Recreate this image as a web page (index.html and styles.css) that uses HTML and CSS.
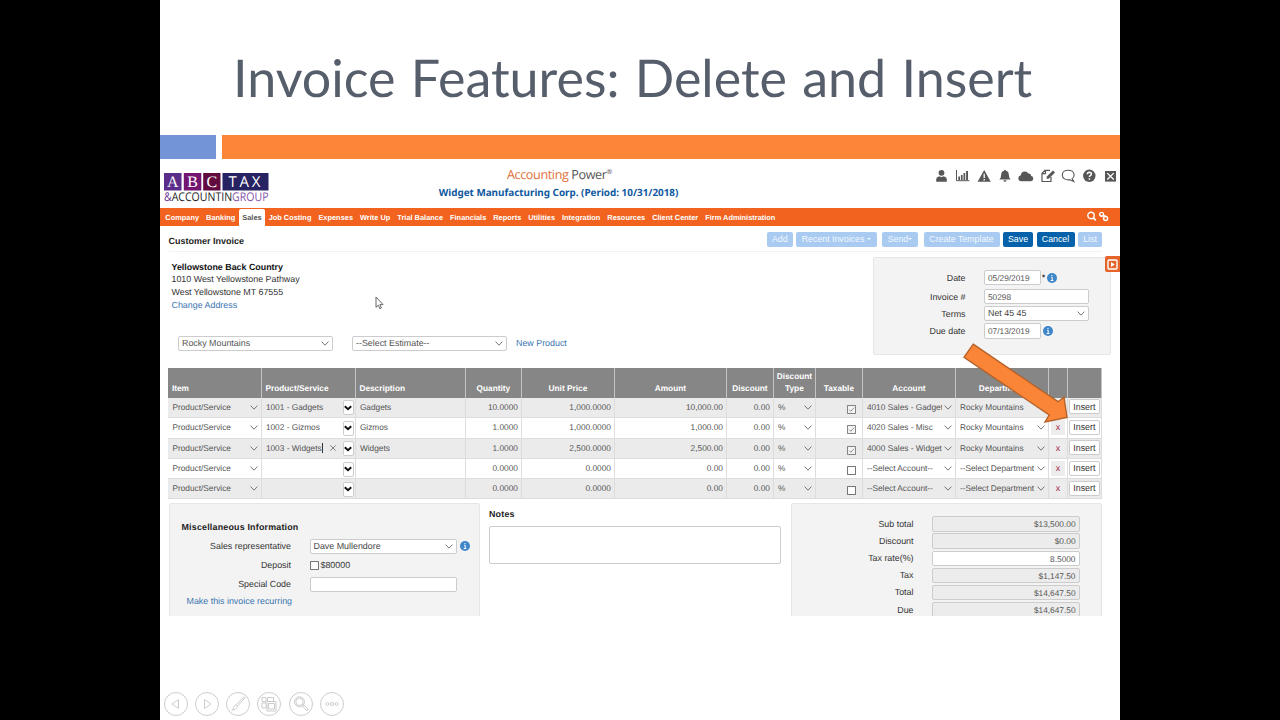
FILE: index.html
```html
<!DOCTYPE html>
<html lang="en">
<head>
    <meta charset="UTF-8">
    <meta name="viewport" content="width=device-width, initial-scale=1.0">
    <title>Invoice Features: Delete and Insert</title>
    <link rel="stylesheet" href="styles.css">
</head>
<body>
    <!-- Shared icons -->
    <svg class="sprite" width="0" height="0">
        <symbol id="chevron" viewBox="0 0 8 5"><path d="M.6.6 4 4.2 7.4.6" fill="none" stroke="#666" stroke-width=".9"/></symbol>
        <symbol id="drop" viewBox="0 0 8 6"><path d="M.8 1.2 4 4.3 7.2 1.2" fill="none" stroke="#111" stroke-width="1.9"/></symbol>
        <symbol id="info" viewBox="0 0 10 10"><circle cx="5" cy="5" r="5" fill="#3f87c9"/><path d="M5 2v1.2M4.2 4.3h1v3M3.7 7.5h2.7" fill="none" stroke="#fff" stroke-width="1"/></symbol>
        <symbol id="checked" viewBox="0 0 8 8"><rect x=".5" y=".5" width="7" height="7" fill="#f4f4f4" stroke="#777" stroke-width=".8"/><path d="M2 4.1 3.4 5.6 6.2 2.4" fill="none" stroke="#888" stroke-width=".8"/></symbol>
        <symbol id="unchecked" viewBox="0 0 8 8"><rect x=".5" y=".5" width="7" height="7" fill="#fff" stroke="#666" stroke-width=".8"/></symbol>
    </svg>

    <div class="slide">
        <h1 class="slide-title">Invoice Features: Delete and Insert</h1>
        <div class="slide-rule">
            <span class="rule-blue"></span>
            <span class="rule-orange"></span>
        </div>

        <div class="app">
            <header class="app-header">
                <svg class="logo" width="106" height="34" viewBox="0 0 106 34">
                    <rect x="0" y="0" width="17.5" height="17.5" fill="#5b2d8a"/>
                    <rect x="19.8" y="0" width="17.5" height="17.5" fill="#74156f"/>
                    <rect x="39.2" y="0" width="17.3" height="17.5" fill="#620b3e"/>
                    <rect x="58.5" y="0" width="46" height="17.5" fill="#272262"/>
                    <g fill="#fff" font-family="Liberation Serif, serif" font-size="16" text-anchor="middle">
                        <text x="8.8" y="14.4">A</text>
                        <text x="28.5" y="14.4">B</text>
                        <text x="47.8" y="14.4">C</text>
                    </g>
                    <text x="64.5" y="14.2" textLength="32" fill="#fff" font-family="Open Sans, sans-serif" font-size="15">TAX</text>
                    <text class="logo-line" x="0" y="27.6" textLength="104.5" lengthAdjust="spacingAndGlyphs"><tspan fill="#6b3596">&amp;</tspan><tspan fill="#222">ACCOUNTIN</tspan><tspan fill="#8455a8">GROUP</tspan></text>
                </svg>
                <div class="brand">
                    <div class="brand-name"><span>Accounting</span> Power<sup>®</sup></div>
                    <div class="company">Widget Manufacturing Corp. (Period: 10/31/2018)</div>
                </div>
                <svg class="header-icons" width="180" height="14" viewBox="0 0 180 14" fill="#575757">
                    <circle cx="5.500" cy="3.800" r="2.900"/>
                    <path d="M.2 12.700V10q.2-2.300 3.200-2.800 2.100 1.400 4.200 0 3 .5 3.200 2.800v2.700z"/>
                    <path d="M20.500 1v10.700h12.800" fill="none" stroke="#575757"/>
                    <path d="M22.300 7.500H24V11h-1.700zM24.900 6h1.700v5h-1.700zM27.500 4h1.700v7h-1.700zM30.100 2h1.900v9h-1.900z"/>
                    <path d="M48.200 1 54.800 12.800H41.600z"/>
                    <path d="M48.200 4.800v4.100M48.200 10v1.400" stroke="#fff" stroke-width="1.300"/>
                    <path d="M69 .7q.9 0 .9 1.100 2.900.7 2.900 4 .1 3.300 1.900 4.700H63.300Q65.100 9.100 65.200 5.800q0-3.300 2.900-4 0-1.100.9-1.100zM67.400 11.300h3.200q-.3 1.500-1.600 1.500t-1.600-1.500z"/>
                    <path d="M85.200 12.300q-2.900-.4-2.900-3.100 0-2.500 2.500-3 .4-3.700 4-3.800 2.600 0 3.600 2.100 2.500-.3 2.700 2.200 2.200.6 2.200 2.800 0 2.500-2.500 2.800z"/>
                    <path d="M115 8v4.500h-9V4.200l3-2.800h5M106 4.700h3.500V1.400" fill="none" stroke="#575757" stroke-width="1.200"/>
                    <path d="m110.500 10 .6-2.700 5.900-5.700 2 1.900-6 5.900z"/>
                    <path d="M132.200 1.200c3.400 0 5.900 2 5.900 4.700 0 1.700-.7 2.900-2 3.700l1.700 3-3.900-1.800c-4.200.6-7.600-1.400-7.600-4.900 0-2.700 2.500-4.700 5.900-4.700z" fill="none" stroke="#575757" stroke-width="1.100"/>
                    <circle cx="153.300" cy="6.800" r="6.200"/>
                    <path d="M151.300 5.300q.2-2 2.100-2 2 .1 2 1.800 0 1-1.100 1.600-.9.500-.9 1.400M153.400 9.300v1.500" fill="none" stroke="#fff" stroke-width="1.500"/>
                    <path d="M169 2h11v10.600h-11z"/>
                    <path d="m171.300 4.100 6.400 6.400M177.700 4.100l-6.400 6.400" stroke="#fff" stroke-width="1.300"/>
                </svg>
            </header>

            <nav class="nav">
                <a class="nav-item">Company</a>
                <a class="nav-item">Banking</a>
                <a class="nav-item active">Sales</a>
                <a class="nav-item">Job Costing</a>
                <a class="nav-item">Expenses</a>
                <a class="nav-item">Write Up</a>
                <a class="nav-item">Trial Balance</a>
                <a class="nav-item">Financials</a>
                <a class="nav-item">Reports</a>
                <a class="nav-item">Utilities</a>
                <a class="nav-item">Integration</a>
                <a class="nav-item">Resources</a>
                <a class="nav-item">Client Center</a>
                <a class="nav-item">Firm Administration</a>
                <svg class="nav-icons" width="22" height="11" viewBox="0 0 22 11" fill="none" stroke="#fff" stroke-width="1.400">
                    <circle cx="4" cy="4.500" r="3.200"/>
                    <path d="m6.300 6.900 2.500 2.500" stroke-width="1.800"/>
                    <circle cx="14.600" cy="3.300" r="1.900"/>
                    <circle cx="18.600" cy="7.500" r="2"/>
                    <path d="m14.600 5 4-.2"/>
                </svg>
            </nav>

            <div class="toolbar">
                <h2 class="page-title">Customer Invoice</h2>
                <div class="actions">
                    <button class="btn btn-add">Add</button>
                    <button class="btn btn-recent">Recent Invoices <i class="caret"></i></button>
                    <button class="btn btn-send">Send<i class="caret"></i></button>
                    <button class="btn btn-template">Create Template</button>
                    <button class="btn btn-save solid">Save</button>
                    <button class="btn btn-cancel solid">Cancel</button>
                    <button class="btn btn-list">List</button>
                </div>
            </div>

            <section class="invoice-top">
                <div class="customer">
                    <div class="address">
                        <strong>Yellowstone Back Country</strong>
                        <span>1010 West Yellowstone Pathway</span>
                        <span>West Yellowstone MT 67555</span>
                        <a class="link">Change Address</a>
                    </div>
                    <div class="customer-selects">
                        <div class="field select">Rocky Mountains<svg class="chev"><use href="#chevron"/></svg></div>
                        <div class="field select">--Select Estimate--<svg class="chev"><use href="#chevron"/></svg></div>
                        <a class="link">New Product</a>
                    </div>
                </div>
                <div class="panel invoice-meta">
                    <div class="meta-row"><label>Date</label><div class="field short">05/29/2019</div><b class="req">*</b><svg class="info"><use href="#info"/></svg></div>
                    <div class="meta-row wide-gap"><label>Invoice #</label><div class="field long">50298</div></div>
                    <div class="meta-row"><label>Terms</label><div class="field long select dark">Net 45 45<svg class="chev"><use href="#chevron"/></svg></div></div>
                    <div class="meta-row"><label>Due date</label><div class="field short">07/13/2019</div><svg class="info after"><use href="#info"/></svg></div>
                </div>
            </section>

            <!-- Line items -->
            <table class="items">
                <colgroup>
                    <col class="c-item"><col class="c-product"><col class="c-desc"><col class="c-qty"><col class="c-price"><col class="c-amount"><col class="c-disc"><col class="c-type"><col class="c-tax"><col class="c-account"><col class="c-dept"><col class="c-del"><col class="c-insert">
                </colgroup>
                <thead>
                    <tr><th class="left">Item</th><th class="left">Product/Service</th><th class="left">Description</th><th>Quantity</th><th>Unit Price</th><th>Amount</th><th>Discount</th><th>Discount Type</th><th>Taxable</th><th>Account</th><th>Department</th><th></th><th></th></tr>
                </thead>
                <tbody>
                    <tr>
                        <td><div class="cell">Product/Service<svg class="chev"><use href="#chevron"/></svg></div></td>
                        <td><div class="cell">1001 - Gadgets<span class="drop"><svg><use href="#drop"/></svg></span></div></td>
                        <td>Gadgets</td><td class="num">10.0000</td><td class="num">1,000.0000</td><td class="num">10,000.00</td><td class="num">0.00</td>
                        <td><div class="cell">%<svg class="chev"><use href="#chevron"/></svg></div></td>
                        <td class="tick"><svg><use href="#checked"/></svg></td>
                        <td><div class="cell"><span class="clip">4010 Sales - Gadgets</span><svg class="chev"><use href="#chevron"/></svg></div></td>
                        <td><div class="cell">Rocky Mountains</div></td>
                        <td class="del"></td><td class="ins"><button class="insert">Insert</button></td>
                    </tr>
                    <tr>
                        <td><div class="cell">Product/Service<svg class="chev"><use href="#chevron"/></svg></div></td>
                        <td><div class="cell">1002 - Gizmos<span class="drop"><svg><use href="#drop"/></svg></span></div></td>
                        <td>Gizmos</td><td class="num">1.0000</td><td class="num">1,000.0000</td><td class="num">1,000.00</td><td class="num">0.00</td>
                        <td><div class="cell">%<svg class="chev"><use href="#chevron"/></svg></div></td>
                        <td class="tick"><svg><use href="#checked"/></svg></td>
                        <td><div class="cell"><span class="clip">4020 Sales - Misc</span><svg class="chev"><use href="#chevron"/></svg></div></td>
                        <td><div class="cell">Rocky Mountains<svg class="chev"><use href="#chevron"/></svg></div></td>
                        <td class="del"><span>x</span></td><td class="ins"><button class="insert">Insert</button></td>
                    </tr>
                    <tr>
                        <td><div class="cell">Product/Service<svg class="chev"><use href="#chevron"/></svg></div></td>
                        <td><div class="cell"><span class="typing">1003 - Widgets</span><svg class="clear" viewBox="0 0 6 6"><path d="m.3.3 5.400 5.400M5.700.3.3 5.700" stroke="#666" stroke-width=".8"/></svg><span class="drop"><svg><use href="#drop"/></svg></span></div></td>
                        <td>Widgets</td><td class="num">1.0000</td><td class="num">2,500.0000</td><td class="num">2,500.00</td><td class="num">0.00</td>
                        <td><div class="cell">%<svg class="chev"><use href="#chevron"/></svg></div></td>
                        <td class="tick"><svg><use href="#checked"/></svg></td>
                        <td><div class="cell"><span class="clip">4000 Sales - Widgets</span><svg class="chev"><use href="#chevron"/></svg></div></td>
                        <td><div class="cell">Rocky Mountains<svg class="chev"><use href="#chevron"/></svg></div></td>
                        <td class="del"><span>x</span></td><td class="ins"><button class="insert">Insert</button></td>
                    </tr>
                    <tr>
                        <td><div class="cell">Product/Service<svg class="chev"><use href="#chevron"/></svg></div></td>
                        <td><div class="cell"><span class="drop"><svg><use href="#drop"/></svg></span></div></td>
                        <td></td><td class="num">0.0000</td><td class="num">0.0000</td><td class="num">0.00</td><td class="num">0.00</td>
                        <td><div class="cell">%<svg class="chev"><use href="#chevron"/></svg></div></td>
                        <td class="tick"><svg><use href="#unchecked"/></svg></td>
                        <td><div class="cell"><span class="clip">--Select Account--</span><svg class="chev"><use href="#chevron"/></svg></div></td>
                        <td><div class="cell"><span class="clip">--Select Department</span><svg class="chev"><use href="#chevron"/></svg></div></td>
                        <td class="del"><span>x</span></td><td class="ins"><button class="insert">Insert</button></td>
                    </tr>
                    <tr>
                        <td><div class="cell">Product/Service<svg class="chev"><use href="#chevron"/></svg></div></td>
                        <td><div class="cell"><span class="drop"><svg><use href="#drop"/></svg></span></div></td>
                        <td></td><td class="num">0.0000</td><td class="num">0.0000</td><td class="num">0.00</td><td class="num">0.00</td>
                        <td><div class="cell">%<svg class="chev"><use href="#chevron"/></svg></div></td>
                        <td class="tick"><svg><use href="#unchecked"/></svg></td>
                        <td><div class="cell"><span class="clip">--Select Account--</span><svg class="chev"><use href="#chevron"/></svg></div></td>
                        <td><div class="cell"><span class="clip">--Select Department</span><svg class="chev"><use href="#chevron"/></svg></div></td>
                        <td class="del"><span>x</span></td><td class="ins"><button class="insert">Insert</button></td>
                    </tr>
                </tbody>
            </table>

            <section class="invoice-bottom">
                <div class="panel misc">
                    <h3>Miscellaneous Information</h3>
                    <div class="misc-row"><label>Sales representative</label><div class="field long select dark">Dave Mullendore<svg class="chev"><use href="#chevron"/></svg></div><svg class="info"><use href="#info"/></svg></div>
                    <div class="misc-row"><label>Deposit</label><svg class="box"><use href="#unchecked"/></svg><span class="deposit">$80000</span></div>
                    <div class="misc-row"><label>Special Code</label><div class="field long"></div></div>
                    <a class="link">Make this invoice recurring</a>
                </div>
                <div class="notes">
                    <h3>Notes</h3>
                    <div class="notes-box"></div>
                </div>
                <div class="panel totals">
                    <div class="total-row"><label>Sub total</label><div class="field off">$13,500.00</div></div>
                    <div class="total-row"><label>Discount</label><div class="field off">$0.00</div></div>
                    <div class="total-row"><label>Tax rate(%)</label><div class="field">8.5000</div></div>
                    <div class="total-row"><label>Tax</label><div class="field off">$1,147.50</div></div>
                    <div class="total-row"><label>Total</label><div class="field off">$14,647.50</div></div>
                    <div class="total-row"><label>Due</label><div class="field off">$14,647.50</div></div>
                </div>
            </section>

            <div class="side-tab">
                <svg width="11" height="11" viewBox="0 0 11 11"><rect x="1" y="1" width="9" height="9" rx="1" fill="none" stroke="#fff" stroke-width="1.400"/><path d="M4 3v5l3.800-2.500z" fill="#fff"/></svg>
            </div>
        </div>

        <!-- Slide show controls -->
        <div class="controls">
            <svg viewBox="0 0 24 24"><circle cx="12" cy="12" r="11.500"/><path d="M14.500 7.500v9L8 12z"/></svg>
            <svg viewBox="0 0 24 24"><circle cx="12" cy="12" r="11.500"/><path d="M9.500 7.500v9L16 12z"/></svg>
            <svg viewBox="0 0 24 24"><circle cx="12" cy="12" r="11.500"/><path d="m10.300 12.700 7.300-7.500q1.200-.5 1.300.6l-7 8zM9.600 13.200l1.900 1.700q-1.600 3.100-5.700 3.300 1.600-1.200 1.800-2.900.3-1.800 2-2.100z"/></svg>
            <svg viewBox="0 0 24 24"><circle cx="12" cy="12" r="11.500"/><path d="M5 5.500h4v4H5zM10.500 5.500h6v4h-6zM5 11h4v5H5zM10 9.500h9V19h-9zM11.500 11.500h6v5.500h-6z"/></svg>
            <svg viewBox="0 0 24 24"><circle cx="12" cy="12" r="11.500"/><circle cx="10.500" cy="9.800" r="5"/><circle cx="10.500" cy="9.800" r="3.700"/><path d="m13.500 14 1.300-1.200 4.200 4.200q.3 1.600-1.400 1.600z"/></svg>
            <svg viewBox="0 0 24 24"><circle cx="12" cy="12" r="11.500"/><circle cx="7.400" cy="12" r="1.500"/><circle cx="12" cy="12" r="1.500"/><circle cx="16.600" cy="12" r="1.500"/></svg>
        </div>

        <svg class="arrow" width="108" height="84" viewBox="0 0 108 84">
            <path d="M13.200 4.200 98 61.700 104 57.300l3 20.200-22 4.500 4.200-7L4 17.300z" fill="#fb8537" stroke="#b5622b" stroke-width="1.400"/>
        </svg>
        <svg class="cursor" width="9" height="14" viewBox="0 0 9 14">
            <path d="M1 1v10.300l2.300-2.100 1.600 3.500 1.500-.7-1.500-3.400H8z" fill="#fff" stroke="#555" stroke-width=".9"/>
        </svg>
    </div>
</body>
</html>
```

FILE: styles.css
```css
* {
    margin: 0;
    padding: 0;
    box-sizing: border-box;
}

body {
    background: #000;
    font-family: 'Liberation Sans', Arial, sans-serif;
    font-size: 8.9px;
    color: #333;
    text-rendering: geometricPrecision;
    overflow: hidden;
}

.sprite {
    position: absolute;
}

.slide {
    position: relative;
    width: 960px;
    height: 720px;
    margin: 0 auto;
    background: #fff;
    display: flex;
    flex-direction: column;
    overflow: hidden;
}

.slide-title {
    height: 135px;
    padding: 46px 0 0 73px;
    font-family: Lato, sans-serif;
    font-size: 52px;
    line-height: 64px;
    font-weight: 400;
    word-spacing: 2px;
    color: #565d6b;
    white-space: nowrap;
}

.slide-rule {
    display: flex;
    gap: 6px;
    height: 23.5px;
}

.rule-blue {
    width: 56px;
    background: #7494d8;
}

.rule-orange {
    flex: 1;
    background: #fd8537;
}

.app {
    position: relative;
    height: 457px;
    overflow: hidden;
}

/* Header */
.app-header {
    height: 49.5px;
    display: flex;
    padding: 0 4px 0 3.5px;
}

.logo {
    margin-top: 14px;
    overflow: visible;
}

.logo-line {
    font-family: 'Open Sans', sans-serif;
    font-size: 12px;
}

.brand {
    width: 300px;
    margin-left: 139px;
    padding-top: 7.5px;
    text-align: center;
    white-space: nowrap;
}

.brand-name {
    font-family: 'Open Sans', sans-serif;
    font-size: 12.6px;
    line-height: 17px;
    letter-spacing: -0.38px;
    padding-left: 2px;
    color: #555;
}

.brand-name span {
    color: #e0703c;
}

.brand-name sup {
    font-size: 7px;
    line-height: 0;
}

.company {
    font-family: 'Noto Sans', sans-serif;
    font-size: 9.9px;
    font-weight: bold;
    line-height: 19px;
    color: #10599f;
}

.header-icons {
    margin: 10.5px 0 0 auto;
}

/* Navigation */
.nav {
    height: 18px;
    display: flex;
    align-items: stretch;
    padding-left: 1.8px;
    background: #f1631f;
    font-size: 7.42px;
    font-weight: bold;
    color: #fff;
}

.nav-item {
    padding: 0 3.5px;
    line-height: 19px;
    white-space: nowrap;
}

.nav-item.active {
    margin-top: 1px;
    line-height: 17px;
    background: #fff;
    color: #555;
    border-radius: 2px 2px 0 0;
}

.nav-icons {
    margin: 3px 11.5px 0 auto;
}

/* Toolbar */
.toolbar {
    height: 26px;
    margin: 0 18px 0 8.5px;
    display: flex;
    justify-content: space-between;
    border-bottom: 1px solid #f2f2f2;
}

.page-title {
    font-size: 9px;
    line-height: 30px;
    color: #222;
}

.actions {
    display: flex;
    gap: 3.5px;
    padding-top: 6px;
}

.btn {
    height: 15px;
    border: none;
    border-radius: 2px;
    background: #a9cbf1;
    color: #f2f8ff;
    font-family: inherit;
    font-size: 8.8px;
    line-height: 15px;
    white-space: nowrap;
}

.btn.solid {
    background: #0561a9;
    color: #fff;
}

.btn-add {
    width: 25.5px;
}

.btn-recent {
    width: 80.5px;
    margin-right: 2px;
}

.btn-send {
    width: 36px;
    margin-right: 2px;
}

.btn-template {
    width: 76px;
}

.btn-save {
    width: 30px;
}

.btn-cancel {
    width: 38px;
}

.btn-list {
    width: 24px;
}

.caret {
    display: inline-block;
    border: 2px solid transparent;
    border-top-color: #f2f8ff;
    border-bottom: none;
    vertical-align: 2px;
}

/* Customer and invoice details */
.invoice-top {
    height: 115.5px;
    display: flex;
    justify-content: space-between;
    padding: 4.5px 9px 0 11.5px;
}

.address {
    display: flex;
    flex-direction: column;
    line-height: 12.7px;
    padding-top: 4px;
    height: 79px;
}

.address strong {
    color: #111;
}

.link {
    color: #3a74b0;
}

.customer-selects {
    display: flex;
    gap: 19.5px;
    padding-left: 6.5px;
}

.customer-selects .field {
    width: 154.5px;
}

.customer-selects .link {
    margin-left: -10px;
    line-height: 14px;
}

.field {
    height: 15.3px;
    padding: 0 3px;
    background: #fff;
    border: 1px solid #ccc;
    border-radius: 2px;
    line-height: 14.5px;
    color: #555;
    white-space: nowrap;
}

.field.select {
    display: flex;
    justify-content: space-between;
    align-items: center;
}

.field.dark {
    color: #444;
}

.chev {
    width: 8px;
    height: 5px;
    flex: none;
}

.panel {
    background: #f3f3f3;
    border: 1px solid #e6e6e6;
    border-radius: 2px;
}

.invoice-meta {
    width: 238px;
    height: 98.5px;
    padding-top: 12.6px;
}

.meta-row {
    display: flex;
    align-items: center;
    height: 15.3px;
    margin-bottom: 1.9px;
}

.meta-row.wide-gap {
    margin-top: 3.5px;
}

.meta-row label {
    width: 91.5px;
    margin-right: 18.5px;
    text-align: right;
}

.meta-row .short {
    width: 57px;
    font-size: 8.3px;
}

.meta-row .long {
    width: 105px;
    font-size: 8.3px;
}

.meta-row .long.select {
    font-size: 8.9px;
}

.req {
    width: 5.5px;
    padding-left: 1px;
    font-size: 8px;
}

.info {
    width: 10px;
    height: 10px;
}

.info.after {
    margin-left: 2px;
}

/* Line items */
.items {
    width: 933px;
    margin-left: 8.4px;
    table-layout: fixed;
    border-collapse: collapse;
    font-size: 8.3px;
    color: #555;
}

.c-item { width: 93px; }
.c-product { width: 94px; }
.c-desc { width: 110px; }
.c-qty { width: 56px; }
.c-price { width: 93px; }
.c-amount { width: 112px; }
.c-disc { width: 47px; }
.c-type { width: 42px; }
.c-tax { width: 47px; }
.c-account { width: 93px; }
.c-dept { width: 93px; }
.c-del { width: 19px; }
.c-insert { width: 34px; }

.items th {
    height: 30px;
    padding: 0 1px 4px;
    vertical-align: bottom;
    background: #868686;
    border-right: 1px solid #c4c4c4;
    color: #fff;
    line-height: 12px;
}

.items th.left {
    padding-left: 3.5px;
    text-align: left;
}

.items td {
    height: 20.3px;
    padding: 0 3px 0 4px;
    border-right: 1px solid #ddd;
    border-bottom: 1px solid #ddd;
    line-height: 15px;
    white-space: nowrap;
}

.items tbody tr:nth-child(odd) {
    background: #ebebeb;
}

.items .cell {
    display: flex;
    align-items: center;
    justify-content: space-between;
    height: 15px;
}

.items .num {
    text-align: right;
}

.clip {
    width: 75px;
    overflow: hidden;
}

.typing {
    border-right: 1px solid #333;
    line-height: 10px;
}

.clear {
    width: 6px;
    height: 6px;
}

.items .drop {
    display: flex;
    align-items: center;
    justify-content: center;
    width: 11px;
    height: 15px;
    margin: 1px -2px 0 0;
    background: #fff;
    border: 1px solid #ccc;
    border-radius: 2px;
}

.cell .drop:only-child {
    margin-left: auto;
}

.drop svg {
    flex: none;
    width: 8px;
    height: 6px;
}

.items .tick {
    padding: 4px 6px 0 0;
    text-align: right;
    line-height: 0;
}

.tick svg {
    width: 9px;
    height: 9px;
}

.items .del {
    padding: 0 2px;
    text-align: center;
}

.del span {
    display: block;
    height: 15px;
    background: #ededed;
    color: #a51a3a;
    font-size: 8.9px;
}

.items .ins {
    padding: 0 0 1px;
    line-height: 0;
    text-align: center;
}

.insert {
    width: 31.5px;
    height: 15px;
    background: #fff;
    border: 1px solid #ccc;
    border-radius: 2px;
    color: #333;
    font-family: inherit;
    font-size: 8.9px;
    line-height: 12px;
}

/* Bottom area */
.invoice-bottom {
    display: flex;
    margin: 4px 0 0 8.5px;
    height: 130px;
}

.invoice-bottom h3 {
    font-size: 8.9px;
    letter-spacing: 0.2px;
    color: #222;
}

.misc {
    width: 311.5px;
    padding-top: 17px;
}

.misc h3 {
    padding-left: 12px;
    line-height: 12px;
    margin-bottom: 3.5px;
}

.misc-row {
    display: flex;
    align-items: center;
    height: 19px;
}

.misc-row label {
    width: 121.5px;
    margin-right: 18.5px;
    text-align: right;
}

.misc-row .long {
    width: 147.5px;
    margin-right: 2.5px;
}

.box {
    width: 9px;
    height: 9px;
    margin-right: 2px;
}

.misc .link {
    display: block;
    padding-left: 17px;
    line-height: 15px;
}

.notes {
    width: 292px;
    margin: 0 10px 0 9px;
}

.notes h3 {
    line-height: 23px;
}

.notes-box {
    height: 38px;
    border: 1px solid #ccc;
    border-radius: 2px;
}

.totals {
    width: 311px;
    padding-top: 11px;
}

.total-row {
    display: flex;
    align-items: center;
    height: 17.1px;
}

.total-row label {
    width: 121.5px;
    margin-right: 18.5px;
    text-align: right;
}

.total-row .field {
    width: 147.5px;
    text-align: right;
    font-size: 8.3px;
}

.field.off {
    background: #ececec;
}

.side-tab {
    position: absolute;
    top: 97.5px;
    right: 0;
    width: 15.5px;
    height: 16px;
    padding: 2.5px;
    background: #e5642a;
    border-radius: 2px 0 0 2px;
    line-height: 0;
}

/* Slide show controls */
.controls {
    display: flex;
    gap: 7.3px;
    margin-top: 76px;
    padding-left: 3.5px;
}

.controls svg {
    width: 24px;
    height: 24px;
    fill: none;
    stroke: #c6c6c6;
    stroke-width: 0.9;
}

/* Annotations over the screen */
.arrow {
    position: absolute;
    left: 800px;
    top: 340px;
}

.cursor {
    position: absolute;
    left: 215px;
    top: 296px;
}
```
